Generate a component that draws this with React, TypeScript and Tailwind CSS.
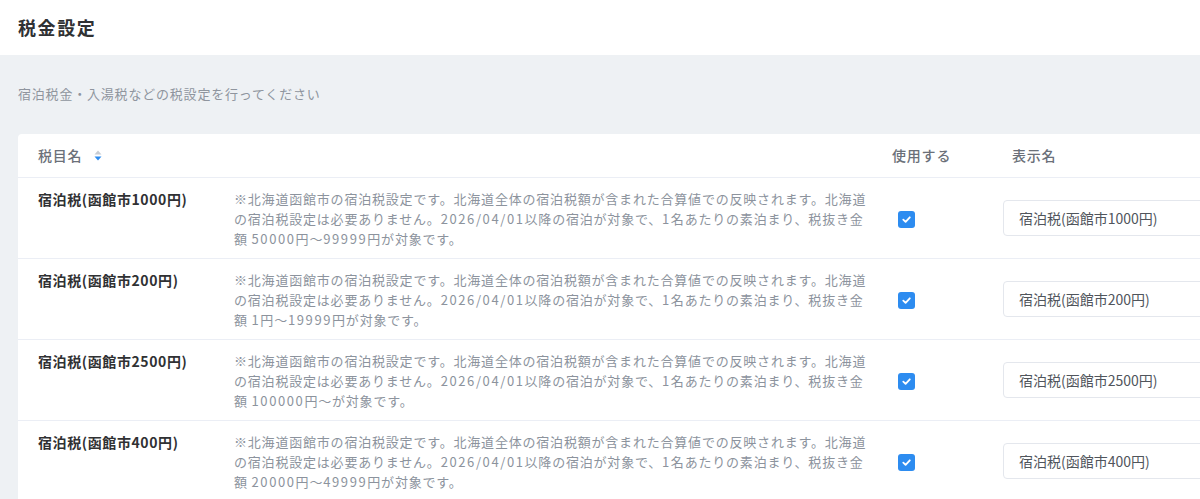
import { useState } from "react";

const FONT = '"Noto Sans CJK JP", "Noto Sans", sans-serif';

type TaxRow = {
  name: string;
  range: [string, string];
  display: string;
};

const ROWS: TaxRow[] = [
  { name: "宿泊税(函館市1000円)", range: ["50000", "99999"], display: "宿泊税(函館市1000円)" },
  { name: "宿泊税(函館市200円)", range: ["1", "19999"], display: "宿泊税(函館市200円)" },
  { name: "宿泊税(函館市2500円)", range: ["100000", ""], display: "宿泊税(函館市2500円)" },
  { name: "宿泊税(函館市400円)", range: ["20000", "49999"], display: "宿泊税(函館市400円)" },
];

// 数字だけ少し字間を広げる
function Num({ children }: { children: string }) {
  return <span className="tracking-[1.6px]">{children}</span>;
}

function Desc({ range }: { range: [string, string] }) {
  const [from, to] = range;
  return (
    <>
      ※北海道函館市の宿泊税設定です。北海道全体の宿泊税額が含まれた合算値での反映されます。北海道の宿泊税設定は必要ありません。
      <Num>2026/04/01</Num>以降の宿泊が対象で、<Num>1</Num>名あたりの素泊まり、税抜き金額 <Num>{from}</Num>円～
      {to && (
        <>
          <Num>{to}</Num>円
        </>
      )}
      が対象です。
    </>
  );
}

function SortIcon() {
  return (
    <svg width="8" height="13" viewBox="0 0 8 13" className="ml-[12px]">
      <path d="M4 1.5 L7.5 5.5 L0.5 5.5 Z" fill="#c8ccd3" />
      <path d="M4 11.5 L7.5 7.5 L0.5 7.5 Z" fill="#2d8cf0" />
    </svg>
  );
}

function Check({ checked, onClick }: { checked: boolean; onClick: () => void }) {
  return (
    <button
      onClick={onClick}
      className={
        checked
          ? "flex h-[17px] w-[17px] items-center justify-center rounded-[3px] bg-[#2d8cf0]"
          : "flex h-[17px] w-[17px] items-center justify-center rounded-[3px] border border-[#dcdfe6] bg-white"
      }
    >
      {checked && (
        <svg width="11" height="11" viewBox="0 0 12 12">
          <path
            d="M2.5 6.2 L5 8.6 L9.6 3.6"
            fill="none"
            stroke="white"
            strokeWidth="2"
            strokeLinecap="round"
            strokeLinejoin="round"
          />
        </svg>
      )}
    </button>
  );
}

export default function App() {
  const [used, setUsed] = useState(ROWS.map(() => true));

  return (
    <div className="h-[499px] w-[1200px] overflow-hidden bg-[#eef1f4]" style={{ fontFamily: FONT }}>
      {/* ヘッダー */}
      <div className="flex h-[55px] items-center bg-white px-[18px]">
        <h1 className="text-[18px] font-bold tracking-[1.6px] text-[#303133]">税金設定</h1>
      </div>

      <div className="px-[18px] pt-[29px]">
        <p className="text-[13px] leading-[20px] tracking-[0.8px] text-[#8f959e]">
          宿泊税金・入湯税などの税設定を行ってください
        </p>

        {/* 一覧 */}
        <div className="mt-[30px] w-[1240px] rounded-[4px] bg-white">
          <div className="flex h-[44px] items-center border-b border-[#ebeef5] text-[14px] font-medium tracking-[0.8px] text-[#6b7079]">
            <div className="flex w-[216px] items-center pl-[20px]">
              税目名
              <SortIcon />
            </div>
            <div className="w-[658px]" />
            <div className="w-[111px]">使用する</div>
            <div className="pl-[9px]">表示名</div>
          </div>

          {ROWS.map((r, i) => (
            <div key={r.name} className="flex h-[81px] border-b border-[#ebeef5]">
              <div className="w-[216px] pl-[20px] pt-[11px] text-[14px] font-bold leading-[20px] tracking-[0.6px] text-[#303133]">
                {r.name}
              </div>
              <div className="w-[658px] pr-[20px] pt-[11px] text-[13px] leading-[20px] tracking-[0.8px] text-[#8c939d]">
                <Desc range={r.range} />
              </div>
              <div className="flex w-[111px] items-center pl-[6px] pt-[2px]">
                <Check
                  checked={used[i]}
                  onClick={() => setUsed((u) => u.map((v, j) => (j === i ? !v : v)))}
                />
              </div>
              <div className="flex items-center">
                <input
                  defaultValue={r.display}
                  className="h-[36px] w-[230px] rounded-[4px] border border-[#e4e7ed] px-[15px] text-[14px] text-[#50555c] outline-none"
                  style={{ fontFamily: FONT }}
                />
              </div>
            </div>
          ))}
        </div>
      </div>
    </div>
  );
}
